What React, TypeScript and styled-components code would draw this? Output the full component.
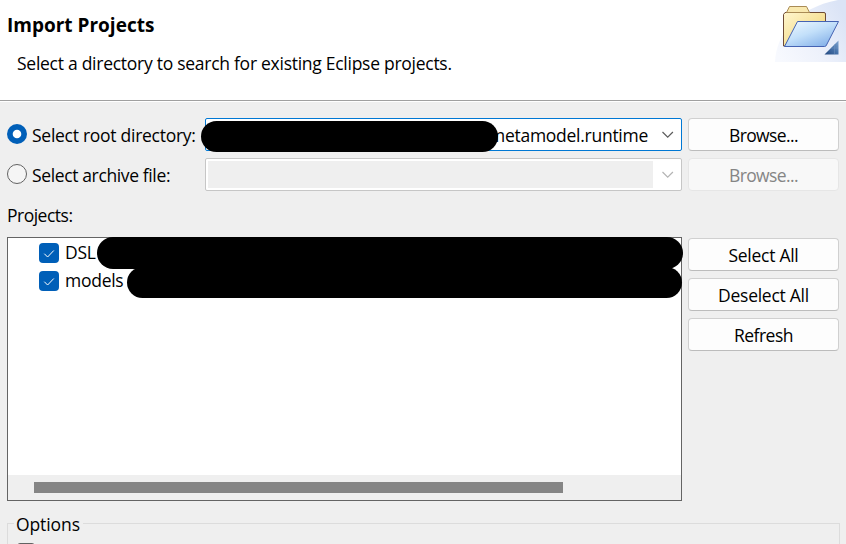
import React from "react";
import styled, { createGlobalStyle } from "styled-components";

const GlobalStyle = createGlobalStyle`
  * { box-sizing: border-box; }
  html, body { margin: 0; background: #efefef; overflow: hidden; }
  body { font: 17.5px/24px "Open Sans", "Noto Sans", sans-serif; color: #000; }
`;

const Dialog = styled.div`
  width: 846px;
  height: 544px;
  overflow: hidden;
  background: #efefef;
`;

const Header = styled.header`
  display: flex;
  justify-content: space-between;
  height: 102px;
  background: #fff;
  border-bottom: 1px solid #fff;
  box-shadow: inset 0 -1px #a0a0a0;
`;

const Heading = styled.div`
  padding: 13px 0 0 7px;
`;

const Title = styled.h1`
  margin: 0;
  font-size: 19px;
  line-height: 24px;
  font-weight: 700;
`;

const Text = styled.span<{ $spacing?: number }>`
  white-space: nowrap;
  letter-spacing: ${(p) => p.$spacing ?? -0.27}px;
`;

const Subtitle = styled.p`
  margin: 14px 0 0 10px;
`;

const Body = styled.main`
  padding: 16px 7px 0;
`;

const Row = styled.div`
  display: grid;
  grid-template-columns: 198px 477px 151px;
  column-gap: 0;
  height: 34px;
  margin-bottom: 6px;
  & > :last-child { margin-left: 6px; }
`;

const Radio = styled.label`
  display: flex;
  align-items: flex-start;
  gap: 5px;
  svg { margin-top: 6px; flex: none; }
  span { margin-top: 5px; }
`;

const Combo = styled.div<{ $disabled?: boolean }>`
  position: relative;
  display: flex;
  align-items: center;
  height: 33px;
  padding: 2px 0 2px 2px;
  background: #fff;
  border: 1px solid ${(p) => (p.$disabled ? "#c6c6c6" : "#0078d4")};
  border-radius: 2px;
`;

const ComboValue = styled.div<{ $disabled?: boolean }>`
  flex: 1;
  height: 27px;
  padding: 2px 5px 0 0;
  text-align: right;
  background: ${(p) => (p.$disabled ? "#efefef" : "#fff")};
`;

const Arrow = styled.svg`
  width: 28px;
  height: 27px;
  flex: none;
`;

const Button = styled.button`
  width: 151px;
  height: 33px;
  flex: none;
  padding: 1px 0 0;
  font: inherit;
  color: #000;
  background: #fdfdfd;
  border: 1px solid #d0d0d0;
  border-bottom-color: #bcbcbc;
  border-radius: 4px;
  &:disabled {
    color: #858585;
    background: #f8f8f8;
    border-color: #e6e6e6;
  }
`;

const SectionLabel = styled.div`
  height: 39px;
  padding-top: 5px;
`;

const ListRow = styled.div`
  display: flex;
  gap: 6px;
`;

const Tree = styled.div`
  position: relative;
  display: flex;
  flex-direction: column;
  width: 675px;
  height: 264px;
  border: 1px solid #646464;
  background: #fff;
`;

const TreeItem = styled.label`
  display: flex;
  align-items: center;
  gap: 6px;
  height: 28px;
  padding: 2px 0 0 31px;
  svg { flex: none; }
  span { padding-bottom: 2px; }
`;

const ScrollTrack = styled.div`
  height: 25px;
  margin-top: auto;
  padding: 7px 0 0 26px;
  background: #efefef;
`;

const ScrollThumb = styled.div`
  width: 529px;
  height: 11px;
  background: #858585;
`;

const ButtonColumn = styled.div`
  display: flex;
  flex-direction: column;
  gap: 7px;
  padding-top: 1px;
`;

const Redaction = styled.i<{ $x: number; $y: number; $w: number; $h: number }>`
  position: absolute;
  z-index: 1;
  left: ${(p) => p.$x}px;
  top: ${(p) => p.$y}px;
  width: ${(p) => p.$w}px;
  height: ${(p) => p.$h}px;
  border-radius: 16px;
  background: #000;
`;

const Options = styled.fieldset`
  width: 833px;
  height: 60px;
  margin: 11px 0 0;
  padding: 8px 9px;
  border: 1px solid #dcdcdc;
  legend { height: 23px; margin-left: -3px; padding: 0 3px 0 2px; }
`;

const EmptyCheckbox = styled.div`
  width: 18px;
  height: 18px;
  border: 1px solid #626262;
  border-radius: 3px;
  background: #f5f5f5;
`;

const RadioMark = ({ checked }: { checked?: boolean }) => (
  <svg width="20" height="20" viewBox="0 0 20 20">
    {checked ? (
      <>
        <circle cx="10" cy="10" r="10" fill="#005fb8" />
        <circle cx="10" cy="10" r="4.3" fill="#fff" />
      </>
    ) : (
      <circle cx="10" cy="10" r="9.5" fill="#f5f5f5" stroke="#626262" />
    )}
  </svg>
);

const CheckMark = () => (
  <svg width="20" height="20" viewBox="0 0 20 20">
    <rect width="20" height="20" rx="4" fill="#005fb8" />
    <path d="M5.3 10.7 8.6 14 14.8 7.5" fill="none" stroke="#fff" strokeWidth="1" />
  </svg>
);

const Chevron = ({ color }: { color: string }) => (
  <Arrow viewBox="0 0 28 27">
    <path d="M9.5 11 14.7 16.2 19.9 11" fill="none" stroke={color} strokeWidth="1.2" />
  </Arrow>
);

const FolderBanner = () => (
  <svg width="80" height="62" viewBox="0 0 80 62">
    <defs>
      <linearGradient id="haze" x1="0" y1="0.8" x2="1" y2="0.3">
        <stop offset="0" stopColor="#f7f9fe" />
        <stop offset="0.5" stopColor="#edf1fb" />
        <stop offset="1" stopColor="#dbe4f6" />
      </linearGradient>
      <linearGradient id="manila" x1="0" y1="0" x2="1" y2="1">
        <stop offset="0" stopColor="#fff6cf" />
        <stop offset="1" stopColor="#efd16c" />
      </linearGradient>
      <linearGradient id="flap" x1="0" y1="0" x2="0.8" y2="1">
        <stop offset="0" stopColor="#f1faff" />
        <stop offset="0.5" stopColor="#c3e0fa" />
        <stop offset="1" stopColor="#82afe8" />
      </linearGradient>
      <linearGradient id="corner" x1="0" y1="1" x2="1" y2="0">
        <stop offset="0" stopColor="#21477e" />
        <stop offset="0.55" stopColor="#4975ac" />
        <stop offset="1" stopColor="#83a7d1" />
      </linearGradient>
    </defs>
    <path d="M9 62C10 35 30 8 72 0H80V62Z" fill="url(#haze)" />
    <path d="M17.5 46V14.5L19 12.5H58Q59.5 12.5 59.5 14V22L53 46Z" fill="url(#manila)" stroke="#6e4b35" />
    <path d="M20.5 12.5 23.5 6.5H40.5L43.5 12.5Z" fill="#f9e9af" stroke="#a98b55" />
    <path d="M31.5 21.5H72.5L60.5 45Q60 46.5 58.5 46.5H18.5Z" fill="url(#flap)" stroke="#4563b3" />
    <path d="M58.5 54.5 72.5 40.5V54.5Z" fill="url(#corner)" />
    <path d="M65 48H72M68.5 44V54" stroke="#7b9bc4" strokeWidth="0.7" opacity="0.6" />
  </svg>
);

export default function App() {
  return (
    <Dialog>
      <GlobalStyle />
      <Header>
        <Heading>
          <Title><Text $spacing={0}>Import Projects</Text></Title>
          <Subtitle><Text>Select a directory to search for existing Eclipse projects.</Text></Subtitle>
        </Heading>
        <FolderBanner />
      </Header>
      <Body>
        <Row>
          <Radio><RadioMark checked /><Text>Select root directory:</Text></Radio>
          <Combo>
            <ComboValue><Text>metamodel.runtime</Text></ComboValue>
            <Chevron color="#5c5c5c" />
            <Redaction $x={-5} $y={2} $w={297} $h={31} />
          </Combo>
          <Button><Text $spacing={-0.6}>Browse...</Text></Button>
        </Row>
        <Row>
          <Radio><RadioMark /><Text $spacing={-0.37}>Select archive file:</Text></Radio>
          <Combo $disabled>
            <ComboValue $disabled />
            <Chevron color="#b4b4b4" />
          </Combo>
          <Button disabled><Text $spacing={-0.6}>Browse...</Text></Button>
        </Row>
        <SectionLabel><Text $spacing={-0.5}>Projects:</Text></SectionLabel>
        <ListRow>
          <Tree>
            <TreeItem><CheckMark /><Text>DSL</Text></TreeItem>
            <TreeItem><CheckMark /><Text>models</Text></TreeItem>
            <Redaction $x={89} $y={-1} $w={586} $h={32} />
            <Redaction $x={119} $y={29} $w={555} $h={31} />
            <ScrollTrack><ScrollThumb /></ScrollTrack>
          </Tree>
          <ButtonColumn>
            <Button><Text>Select All</Text></Button>
            <Button><Text>Deselect All</Text></Button>
            <Button><Text $spacing={-0.5}>Refresh</Text></Button>
          </ButtonColumn>
        </ListRow>
        <Options>
          <legend><Text $spacing={-0.1}>Options</Text></legend>
          <EmptyCheckbox />
        </Options>
      </Body>
    </Dialog>
  );
}
